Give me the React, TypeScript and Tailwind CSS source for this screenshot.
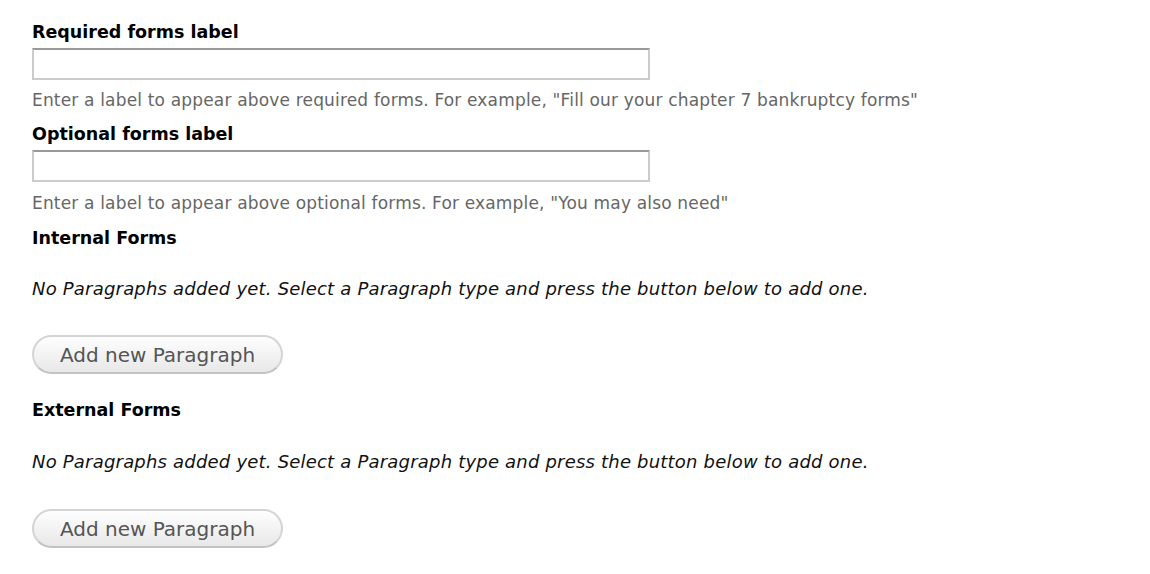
export default function App() {
  return (
    <div className="min-h-[574px] bg-white px-[32px] pt-[21px] font-['DejaVu_Sans',sans-serif] text-[#222]">
      <TextField
        label="Required forms label"
        description={'Enter a label to appear above required forms. For example, "Fill our your chapter 7 bankruptcy forms"'}
      />
      <div className="mt-[13px]">
        <TextField
          label="Optional forms label"
          description={'Enter a label to appear above optional forms. For example, "You may also need"'}
          descClassName="mt-[11px]"
        />
      </div>
      <ParagraphsField label="Internal Forms" className="mt-[14px]" />
      <ParagraphsField label="External Forms" className="mt-[25px]" noteClassName="mt-[30px]" buttonClassName="mt-[36px]" />
    </div>
  );
}

function TextField({ label, description, descClassName = 'mt-[10px]' }: { label: string; description: string; descClassName?: string }) {
  return (
    <div>
      <label className="block text-[17.5px] font-bold leading-[22px] text-black">{label}</label>
      <input
        type="text"
        className="mt-[5px] block h-[32px] w-[618px] border-2 border-[#cccccc] border-t-[#999999] bg-white outline-none"
      />
      <div className={`${descClassName} text-[17px] leading-[20px] tracking-[0.17px] text-[#666]`}>{description}</div>
    </div>
  );
}

function ParagraphsField({
  label,
  className,
  noteClassName = 'mt-[29px]',
  buttonClassName = 'mt-[35px]',
}: {
  label: string;
  className?: string;
  noteClassName?: string;
  buttonClassName?: string;
}) {
  return (
    <div className={className}>
      <div className="text-[17.5px] font-bold leading-[22px] text-black">{label}</div>
      <p className={`${noteClassName} text-[18px] italic leading-[22px] tracking-[0.2px] text-[#111]`}>
        No Paragraphs added yet. Select a Paragraph type and press the button below to add one.
      </p>
      <button
        type="button"
        className={`${buttonClassName} flex h-[39px] w-[251px] items-center justify-center rounded-full border-2 border-[#d4d4d4] border-b-[#c2c2c2] bg-gradient-to-b from-[#fefefe] to-[#e8e8e8] text-[20px] text-[#555]`}
      >
        Add new Paragraph
      </button>
    </div>
  );
}
